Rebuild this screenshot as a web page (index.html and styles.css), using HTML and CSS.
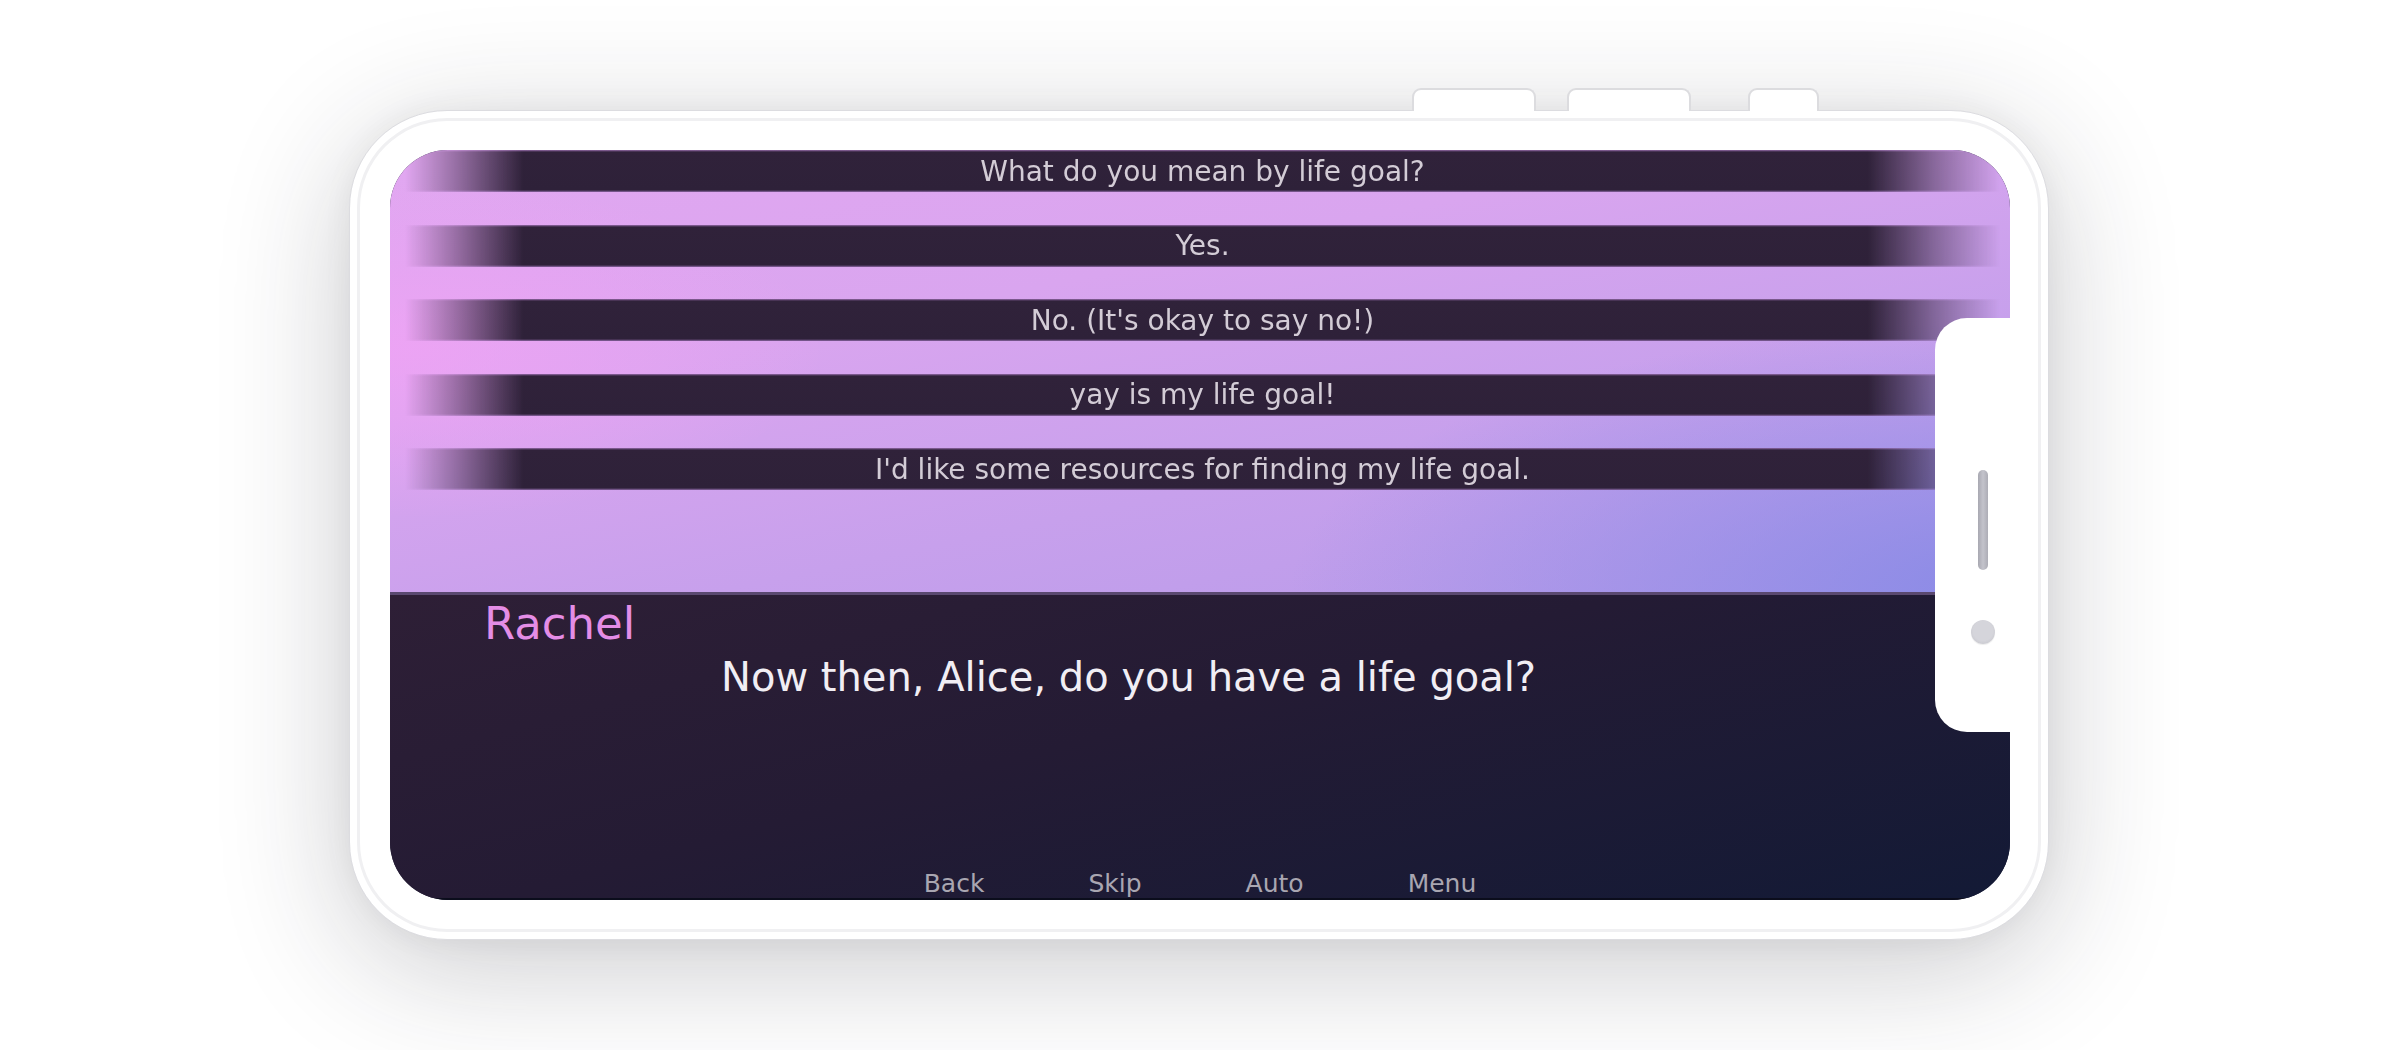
FILE: index.html
```html
<!DOCTYPE html>
<html lang="en">
<head>
<meta charset="utf-8">
<title>Visual novel – phone preview</title>
<link rel="stylesheet" href="styles.css">
</head>
<body>
<div class="stage">
  <div class="phone">
    <div class="side-buttons">
      <span class="hw-btn"></span>
      <span class="hw-btn"></span>
      <span class="hw-btn narrow"></span>
    </div>
    <div class="screen">
      <div class="choices">
        <div class="choice">What do you mean by life goal?</div>
        <div class="choice">Yes.</div>
        <div class="choice">No. (It's okay to say no!)</div>
        <div class="choice">yay is my life goal!</div>
        <div class="choice">I'd like some resources for finding my life goal.</div>
      </div>
      <div class="dialog">
        <div class="speaker">Rachel</div>
        <div class="line">Now then, Alice, do you have a life goal?</div>
        <nav class="quick-menu">
          <span>Back</span>
          <span>Skip</span>
          <span>Auto</span>
          <span>Menu</span>
        </nav>
      </div>
      <div class="notch">
        <span class="pill"></span>
        <span class="dot"></span>
      </div>
    </div>
  </div>
</div>
</body>
</html>
```

FILE: styles.css
```css
html, body {
  margin: 0;
  background: #ffffff;
}

body {
  width: 2400px;
  height: 1050px;
  overflow: hidden;
  font-family: "DejaVu Sans", "Noto Sans", sans-serif;
}

.stage {
  padding: 110px 0 0 349px;
}

.phone {
  position: relative;
  box-sizing: border-box;
  width: 1700px;
  height: 830px;
  padding: 39px 38px 39px 40px;
  border: 1px solid #dcdce0;
  border-radius: 98px;
  background: #ffffff;
  box-shadow:
    inset 0 0 0 7px #ffffff,
    inset 0 0 0 10px #f0f0f2,
    0 26px 130px rgba(35, 35, 45, 0.24),
    0 0 30px rgba(0, 0, 0, 0.05);
}

.side-buttons {
  position: absolute;
  top: -23px;
  left: 1062px;
  display: flex;
  gap: 31px;
}

.hw-btn {
  box-sizing: border-box;
  width: 124px;
  height: 23px;
  background: #ffffff;
  border: 2px solid #dcdcdf;
  border-bottom: none;
  border-radius: 9px 9px 0 0;
}

.hw-btn.narrow {
  width: 71px;
  margin-left: 26px;
}

.screen {
  position: relative;
  height: 750px;
  border-radius: 58px;
  overflow: hidden;
  display: flex;
  flex-direction: column;
  background: #1c1a33;
}

.choices {
  box-sizing: border-box;
  height: 442px;
  padding: 0 10px 0 15px;
  display: flex;
  flex-direction: column;
  gap: 32.5px;
  background:
    radial-gradient(ellipse 420px 170px at 1% 45%, rgba(243, 163, 246, 0.7), rgba(243, 163, 246, 0) 100%),
    radial-gradient(ellipse 720px 270px at 100% 100%, rgba(136, 138, 230, 0.95), rgba(136, 138, 230, 0) 100%),
    linear-gradient(168deg, #e2a7f1 0%, #d9a5ef 35%, #c7a0ec 65%, #b59ae9 100%);
}

.choice {
  height: 42px;
  flex: none;
  display: flex;
  align-items: center;
  justify-content: center;
  font-size: 28px;
  color: #d3ccd6;
  background: linear-gradient(to bottom,
    rgba(140, 100, 160, 0.9) 0,
    #30223a 2px,
    #2e2139 40px,
    rgba(130, 95, 155, 0.9) 42px);
  -webkit-mask-image: linear-gradient(to right, transparent 0, rgba(0,0,0,0.45) 55px, #000 118px, #000 calc(100% - 132px), rgba(0,0,0,0.45) calc(100% - 65px), transparent 100%);
  mask-image: linear-gradient(to right, transparent 0, rgba(0,0,0,0.45) 55px, #000 118px, #000 calc(100% - 132px), rgba(0,0,0,0.45) calc(100% - 65px), transparent 100%);
}

.dialog {
  flex: 1;
  display: flex;
  flex-direction: column;
  border-top: 3px solid #5a4970;
  border-bottom: 2px solid #0b0d1c;
  background: linear-gradient(165deg, #2e1f36 0%, #241b34 45%, #131a36 100%);
}

.speaker {
  margin: 3px 0 0 94px;
  font-size: 45px;
  line-height: 52px;
  color: #e48de6;
}

.line {
  margin: 3px 0 0 331px;
  font-size: 40px;
  line-height: 48px;
  color: #f1eef4;
}

.quick-menu {
  margin-top: auto;
  display: flex;
  justify-content: center;
  gap: 104px;
  font-size: 25px;
  line-height: 29px;
  color: #a9a6b1;
}

.notch {
  position: absolute;
  right: 0;
  top: 168px;
  box-sizing: border-box;
  width: 75px;
  height: 414px;
  padding: 152px 0 0 20px;
  display: flex;
  flex-direction: column;
  align-items: center;
  gap: 50px;
  background: #ffffff;
  border-radius: 32px 0 0 32px;
}

.pill {
  width: 10px;
  height: 100px;
  border-radius: 5px;
  background: linear-gradient(to right, #a8a8b1, #c3c3cb 50%, #adadb6);
}

.dot {
  width: 24px;
  height: 24px;
  border-radius: 50%;
  background: radial-gradient(circle at 50% 45%, #d5d5db 55%, #bebec5 100%);
  box-shadow: 0 1px 1px rgba(0, 0, 0, 0.08);
}
```
